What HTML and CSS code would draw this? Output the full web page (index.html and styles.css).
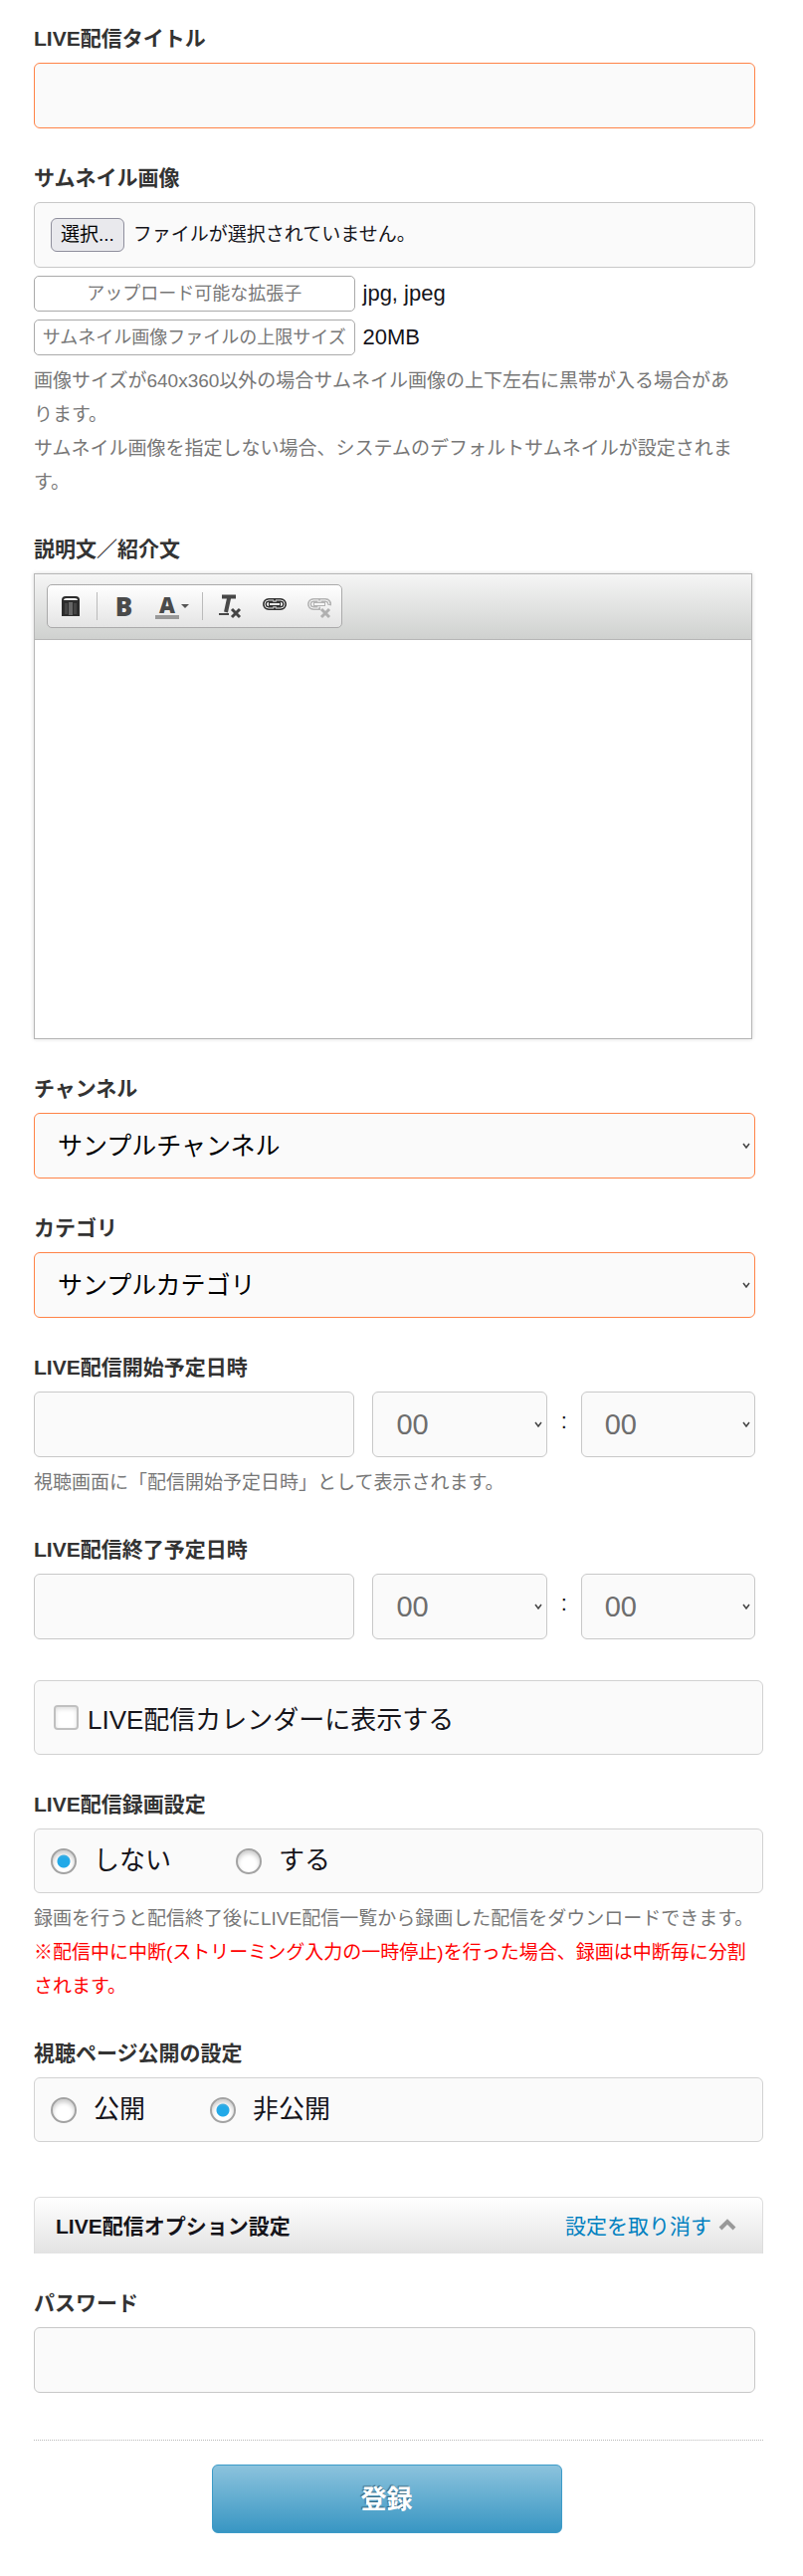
FILE: index.html
```html
<!DOCTYPE html>
<html lang="ja">
<head>
    <meta charset="UTF-8">
    <meta name="viewport" content="width=device-width, initial-scale=1">
    <title>LIVE配信</title>
    <link rel="stylesheet" href="styles.css">
</head>
<body>
<form class="live-form">
    <div class="field">
        <label class="label" for="title">LIVE配信タイトル</label>
        <input class="control required" type="text" id="title">
    </div>

    <div class="field">
        <span class="label">サムネイル画像</span>
        <div class="control file-box">
            <input class="file-input" type="file" id="thumbnail">
            <label class="file-button" for="thumbnail">選択...</label>
            <span class="text">ファイルが選択されていません。</span>
        </div>
        <div class="limit"><span class="tag">アップロード可能な拡張子</span>jpg, jpeg</div>
        <div class="limit"><span class="tag">サムネイル画像ファイルの上限サイズ</span>20MB</div>
        <p class="note">画像サイズが640x360以外の場合サムネイル画像の上下左右に黒帯が入る場合があ<br>ります。<br>サムネイル画像を指定しない場合、システムのデフォルトサムネイルが設定されます。</p>
    </div>

    <div class="field">
        <label class="label" for="description">説明文／紹介文</label>
        <div class="editor">
            <div class="toolbar">
                <div class="tools">
                    <button class="tool" type="button" aria-label="Source">
                        <svg width="20" height="24" viewBox="0 0 20 24">
                            <path d="M1 6q0-4 4-4h10q4 0 4 4v16H1z" fill="#2c2c2c"/>
                            <path d="M3 6q0-2 3-2h8q3 0 3 2z" fill="#f4f4f4"/>
                            <path d="M4 9h3v11H4z" fill="#444"/>
                            <path d="M8 8h4v13H8z" fill="#666"/>
                            <path d="M13 9h3v11h-3z" fill="#444"/>
                        </svg>
                    </button>
                    <span class="separator"></span>
                    <button class="tool tool-bold" type="button" aria-label="Bold">B</button>
                    <button class="tool tool-color" type="button" aria-label="Text color">
                        <span class="color-letter">A</span>
                        <svg width="8" height="4" viewBox="0 0 8 4"><path d="M0 0h8L4 4z" fill="#555"/></svg>
                    </button>
                    <span class="separator"></span>
                    <button class="tool" type="button" aria-label="Remove format">
                        <svg width="24" height="26" viewBox="0 0 24 26">
                            <path d="M4 3.500h14M11.500 3 8 19" fill="none" stroke="#484848" stroke-width="4"/>
                            <path d="M1 21h10" stroke="#484848" stroke-width="2"/>
                            <path d="m14 16 8 8m0-8-8 8" stroke="#444" stroke-width="3"/>
                        </svg>
                    </button>
                    <button class="tool" type="button" aria-label="Link">
                        <svg width="24" height="26" viewBox="0 0 24 26" fill="none">
                            <g stroke="#333" stroke-width="4">
                                <path d="M11 8.500V7H6a4 4 0 0 0 0 8h5v-1.500"/>
                                <path d="M13 8.500V7h5a4 4 0 0 1 0 8h-5v-1.500"/>
                                <path d="M6 11h12"/>
                            </g>
                            <g stroke="#e8e8e8" stroke-width="1">
                                <path d="M11 9V7H6a4 4 0 0 0 0 8h5v-2"/>
                                <path d="M13 9V7h5a4 4 0 0 1 0 8h-5v-2"/>
                                <path d="M7 11h10" stroke-width="2"/>
                            </g>
                        </svg>
                    </button>
                    <button class="tool" type="button" aria-label="Unlink" disabled>
                        <svg width="24" height="26" viewBox="0 0 24 26" fill="none">
                            <g stroke="#b4b4b4" stroke-width="4">
                                <path d="M11 8.500V7H6a4 4 0 0 0 0 8h5v-1.500"/>
                                <path d="M13 8.500V7h5a4 4 0 0 1 4 5"/>
                                <path d="M6 11h12"/>
                            </g>
                            <g stroke="#f6f6f6" stroke-width="1">
                                <path d="M11 9V7H6a4 4 0 0 0 0 8h5v-2"/>
                                <path d="M13 9V7h5a4 4 0 0 1 4 4"/>
                                <path d="M7 11h10" stroke-width="2"/>
                            </g>
                            <path d="m14 16 8 8m0-8-8 8" stroke="#b0b0b0" stroke-width="3"/>
                        </svg>
                    </button>
                </div>
            </div>
            <textarea class="editor-text" id="description"></textarea>
        </div>
    </div>

    <div class="field">
        <label class="label" for="channel">チャンネル</label>
        <select class="control select required" id="channel">
            <option>サンプルチャンネル</option>
        </select>
    </div>

    <div class="field">
        <label class="label" for="category">カテゴリ</label>
        <select class="control select required" id="category">
            <option>サンプルカテゴリ</option>
        </select>
    </div>

    <div class="field">
        <label class="label" for="start_date">LIVE配信開始予定日時</label>
        <div class="datetime">
            <input class="control" type="text" id="start_date">
            <select class="control select time" aria-label="開始時"><option>00</option></select>
            <span class="colon">:</span>
            <select class="control select time" aria-label="開始分"><option>00</option></select>
        </div>
        <p class="note">視聴画面に「配信開始予定日時」として表示されます。</p>
    </div>

    <div class="field">
        <label class="label" for="end_date">LIVE配信終了予定日時</label>
        <div class="datetime">
            <input class="control" type="text" id="end_date">
            <select class="control select time" aria-label="終了時"><option>00</option></select>
            <span class="colon">:</span>
            <select class="control select time" aria-label="終了分"><option>00</option></select>
        </div>
    </div>

    <div class="choice-box calendar">
        <label class="check"><input class="checkbox" type="checkbox">LIVE配信カレンダーに表示する</label>
    </div>

    <div class="field">
        <span class="label">LIVE配信録画設定</span>
        <div class="choice-box">
            <label class="choice"><input class="radio" type="radio" name="record" checked><span class="text">しない</span></label>
            <label class="choice"><input class="radio" type="radio" name="record"><span class="text">する</span></label>
        </div>
        <p class="note">録画を行うと配信終了後にLIVE配信一覧から録画した配信をダウンロードできます。<br><span class="warning">※配信中に中断(ストリーミング入力の一時停止)を行った場合、録画は中断毎に分割<br>されます。</span></p>
    </div>

    <div class="field">
        <span class="label">視聴ページ公開の設定</span>
        <div class="choice-box">
            <label class="choice"><input class="radio" type="radio" name="publish"><span class="text">公開</span></label>
            <label class="choice"><input class="radio" type="radio" name="publish" checked><span class="text">非公開</span></label>
        </div>
    </div>

    <div class="option-bar">
        <span class="option-title">LIVE配信オプション設定</span>
        <a class="option-link" href="#">設定を取り消す
            <svg width="18" height="12" viewBox="0 0 18 12"><path d="m2 10 7-7 7 7" fill="none" stroke="#999" stroke-width="4"/></svg>
        </a>
    </div>

    <div class="field">
        <label class="label" for="password">パスワード</label>
        <input class="control" type="password" id="password">
    </div>

    <div class="actions">
        <button class="submit" type="submit">登録</button>
    </div>
</form>
</body>
</html>
```

FILE: styles.css
```css
* {
    box-sizing: border-box;
}
body {
    margin: 0;
    background: #fff;
    color: #15141a;
    font-family: "Liberation Sans", "Noto Sans CJK JP", sans-serif;
}
input, select, textarea, button {
    font-family: inherit;
}
.live-form {
    padding: 23px 40px 43px 34px;
}
.field {
    margin-bottom: 34px;
}
.label {
    display: block;
    margin-bottom: 8px;
    color: #333;
    font-size: 21px;
    font-weight: bold;
    line-height: 32px;
}
.control {
    display: block;
    width: calc(100% - 8px);
    height: 66px;
    margin: 0;
    padding: 0 16px;
    border: 1px solid #c8c8c8;
    border-radius: 6px;
    background-color: #fafafa;
    font-size: 25px;
}
.required {
    border-color: #ff8347;
}
.text {
    padding-bottom: 6px;
}

/* thumbnail */
.file-box {
    position: relative;
    display: flex;
    align-items: center;
    gap: 9px;
    font-size: 19px;
}
.file-input {
    position: absolute;
    width: 1px;
    height: 1px;
    opacity: 0;
}
.file-button {
    padding: 0 9px;
    border: 1px solid #8f8f9d;
    border-radius: 6px;
    background: #e9e9ed;
    color: #000;
    line-height: 32px;
}
.limit {
    display: flex;
    align-items: center;
    gap: 8px;
    margin-top: 8px;
    font-size: 22px;
    line-height: 34px;
}
.tag {
    width: 44%;
    border: 1px solid #aaa;
    border-radius: 5px;
    color: #777;
    font-size: 18px;
    text-align: center;
}
.note {
    margin: 9px 0 0;
    color: #777;
    font-size: 19px;
    line-height: 34px;
}
.warning {
    color: #f00;
}

/* editor */
.editor {
    width: calc(100% - 11px);
    border: 1px solid #b6b6b6;
    box-shadow: 0 0 4px rgba(0, 0, 0, 0.15);
}
.toolbar {
    padding: 10px 12px 11px;
    border-bottom: 1px solid #b6b6b6;
    background: linear-gradient(#f5f5f5, #cfd1cf);
}
.tools {
    display: inline-flex;
    align-items: center;
    height: 44px;
    border: 1px solid #aaa;
    border-radius: 5px;
    background: linear-gradient(#fff, #e4e4e4);
    vertical-align: top;
}
.tool {
    display: flex;
    align-items: center;
    justify-content: center;
    width: 45px;
    height: 42px;
    padding: 0;
    border: 0;
    background: none;
    color: #4a4a4a;
    font-family: "Open Sans", sans-serif;
    font-weight: 800;
}
.tool-bold {
    font-size: 26px;
}
.tool-color {
    gap: 2px;
    width: 52px;
    font-size: 22px;
}
.color-letter {
    width: 24px;
    border-bottom: 4px solid #999;
    line-height: 22px;
}
.separator {
    width: 1px;
    height: 28px;
    margin: 0 4px;
    background: #bbb;
}
.editor-text {
    display: block;
    width: 100%;
    height: 400px;
    padding: 16px;
    border: 0;
    resize: none;
    font-size: 19px;
}

/* selects */
.select {
    padding: 0 23px;
    appearance: none;
    background-image: url("data:image/svg+xml,%3Csvg xmlns='http://www.w3.org/2000/svg' width='8' height='7'%3E%3Cpath d='m1 1 3 4 3-4' fill='none' stroke='%23444' stroke-width='1.5'/%3E%3C/svg%3E");
    background-position: right 4px center;
    background-repeat: no-repeat;
    color: #000;
}
.datetime {
    display: grid;
    grid-template-columns: 340fr 175fr 34px 175fr;
    align-items: center;
    width: calc(100% - 8px);
}
.datetime .control {
    width: 100%;
}
.datetime input.control {
    width: calc(100% - 18px);
}
.time {
    color: #6d6d6d;
    font-size: 29px;
}
.colon {
    padding-bottom: 6px;
    font-size: 22px;
    text-align: center;
}

/* radio and check boxes */
.choice-box {
    display: flex;
    align-items: center;
    gap: 65px;
    height: 65px;
    padding: 0 16px;
    border: 1px solid #d2d2d2;
    border-radius: 6px;
    background: #fafafa;
    font-size: 26px;
}
.calendar {
    height: 75px;
    margin: 41px 0 34px;
    padding: 0 19px;
}
.choice, .check {
    display: flex;
    align-items: center;
    gap: 17px;
}
.check {
    gap: 9px;
}
.checkbox, .radio {
    width: 26px;
    height: 26px;
    margin: 0;
    appearance: none;
    border: 2px solid #a2a2a2;
    border-radius: 50%;
    background: #fff;
    box-shadow: inset 0 3px 4px #ccc;
}
.checkbox {
    width: 25px;
    height: 25px;
    border-color: #c0c0c0;
    border-radius: 4px;
    box-shadow: inset 0 2px 4px #ddd;
}
.radio:checked {
    background: radial-gradient(circle, #22a9e8 6px, #fff 7px);
}

.option-bar {
    display: flex;
    align-items: center;
    justify-content: space-between;
    height: 57px;
    margin: 55px 0 34px;
    padding: 0 26px 3px 21px;
    border: 1px solid #ddd;
    border-bottom: 0;
    border-radius: 6px 6px 0 0;
    background: linear-gradient(#fff, #e3e3e3);
    font-size: 21px;
}
.option-title {
    font-weight: bold;
}
.option-link {
    display: flex;
    align-items: center;
    gap: 7px;
    color: #0080c0;
    text-decoration: none;
}

.actions {
    display: flex;
    justify-content: center;
    margin-top: 47px;
    padding: 24px 24px 0 0;
    border-top: 1px dotted #bbb;
}
.submit {
    width: 352px;
    max-width: 100%;
    height: 69px;
    padding: 0 0 4px;
    border: 1px solid #3c9bc8;
    border-radius: 6px;
    background: linear-gradient(#8cc3dd, #3896c3);
    color: #fff;
    font-size: 26px;
    font-weight: bold;
    text-shadow: -1px -1px 1px rgba(0, 0, 0, 0.4);
}
```
